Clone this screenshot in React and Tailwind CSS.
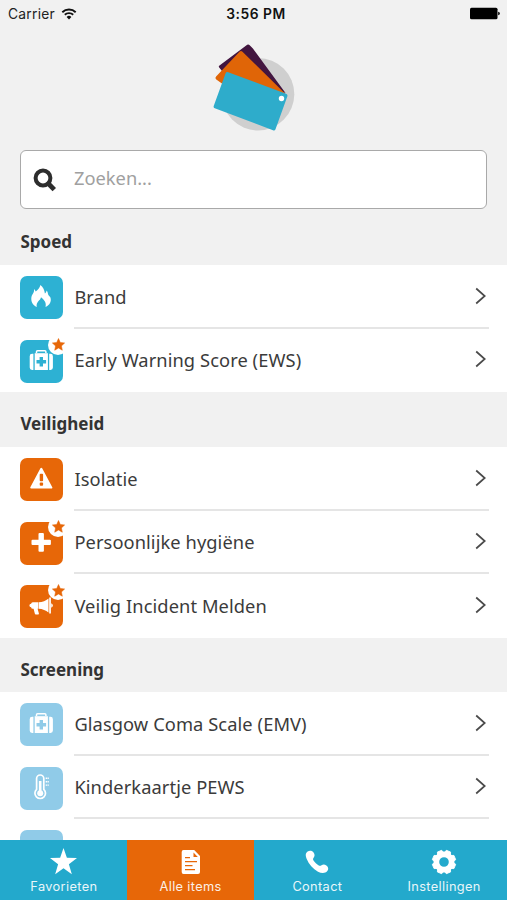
const Flame = () => (
  <path
    fill="#fff"
    d="M16.800 31C12.600 29 10.800 25.400 11.400 21.200c.3-2.400 1.700-3.200 2.400-5.200.3-1 .3-2 .2-3 .9.7 1.400 1.600 1.700 2.600C17.800 14 19.800 12 20.400 9c2.800 2.200 4 5 4.500 8.400.9-.6 1.500-1.400 1.600-2.900 1 .9 1.300 2.200 1.500 3.500.3 1.400 1.600 1.900 2.300 3.300 1.600 3.900-.6 8-4.800 9.600.9-3.600-.2-6.200-4.500-9.700-.3 3.200-5.400 4.500-4.200 9.800Z"
  />
);

const MedKit = ({ plus }) => (
  <g>
    <path d="M16.500 13v-1.200q0-1 1-1h7.400q1 0 1 1V13" fill="none" stroke="#fff" strokeWidth="1.500" />
    <path d="M14.700 13.200h13.200V30H14.700z" fill="#fff" />
    <path d="M13.400 13.800V30h-1.300q-2.400 0-2.400-2.400V16.200q0-2.400 2.400-2.400ZM29.200 13.800V30h1.300q2.400 0 2.400-2.400V16.200q0-2.400-2.400-2.400Z" fill="#fff" />
    <path d="M21.300 17v9.600M16.500 21.800h9.600" stroke={plus} strokeWidth="3.400" />
  </g>
);

const Warning = () => (
  <g>
    <path d="M21.300 10.800 31.400 29.600H11.200Z" fill="#fff" stroke="#fff" strokeWidth="2" strokeLinejoin="round" />
    <rect x="19.700" y="15.800" width="3.400" height="7.400" rx="1" fill="#e76708" />
    <rect x="19.700" y="24.600" width="3.400" height="3.200" rx="1" fill="#e76708" />
  </g>
);

const Plus = () => (
  <g fill="#fff">
    <rect x="18.500" y="11" width="5.400" height="18.800" rx="1" />
    <rect x="11.500" y="17.700" width="19.400" height="5.400" rx="1" />
  </g>
);

const Megaphone = () => (
  <g fill="#fff">
    <path d="M12.800 17.300h5.400v6.400h-5.400q-1.500 0-1.700-1.500-1.700-.2-1.700-1.700t1.700-1.700q.2-1.500 1.700-1.500Z" />
    <path d="M18.600 17.300c4-.2 7.200-1.600 9.900-3.900v14.100c-2.700-2.200-5.900-3.600-9.900-3.800Z" />
    <path d="M29.200 12.400h1.700v16h-1.700zM31.200 18.200q1.700.8 1.700 2.300t-1.700 2.300Z" />
    <path d="M13.400 23h4l1.500 5.500q.2 1-.8 1h-2.300q-.8 0-1-.9Z" />
  </g>
);

const Thermometer = () => (
  <g fill="none" stroke="#fff">
    <path d="M16.600 22.300V11.600a3.600 3.600 0 0 1 7.200 0v10.700a5.300 5.300 0 1 1-7.200 0Z" strokeWidth="1.700" />
    <path d="M20.200 14v11" strokeWidth="2.600" />
    <circle cx="20.200" cy="26.200" r="3" fill="#fff" stroke="none" />
    <path d="M25.700 11.300h3.200M25.700 14.700h3.200M25.700 18.100h3.200" strokeWidth="1.400" strokeDasharray="1.300 .5" />
  </g>
);

const Star = ({ size, className }) => (
  <svg width={size} height={size} viewBox="0 0 24 24" className={className}>
    <path d="m12 0 3 8.700 9 .1-7.200 5.600 2.600 8.900L12 18l-7.400 5.300 2.600-8.900L0 8.800l9-.1Z" fill="currentColor" />
  </svg>
);

// Fuller star used on the favorite badge
const BadgeStar = () => (
  <svg width="13" height="13" viewBox="0 0 24 24">
    <path
      d="m12 1 3.300 7.300 8 .9-5.900 5.400 1.600 7.900-7-4-7 4 1.600-7.900L.7 9.200l8-.9Z"
      fill="#e76708"
      stroke="#e76708"
      strokeLinejoin="round"
    />
  </svg>
);

const sections = [
  {
    title: "Spoed",
    header: "h-[47px] pt-px",
    tile: "bg-[#2db1d3]",
    items: [
      { label: "Brand", icon: <Flame /> },
      { label: "Early Warning Score (EWS)", icon: <MedKit plus="#2db1d3" />, favorite: true },
    ],
  },
  {
    title: "Veiligheid",
    header: "h-[55px] pt-[9px]",
    tile: "bg-[#e76708]",
    items: [
      { label: "Isolatie", icon: <Warning /> },
      { label: "Persoonlijke hygiëne", icon: <Plus />, favorite: true },
      { label: "Veilig Incident Melden", icon: <Megaphone />, favorite: true },
    ],
  },
  {
    title: "Screening",
    header: "h-[54.5px] pt-[9px]",
    tile: "bg-[#90cbe8]",
    items: [
      { label: "Glasgow Coma Scale (EMV)", icon: <MedKit plus="#90cbe8" /> },
      { label: "Kinderkaartje PEWS", icon: <Thermometer /> },
      { label: "", icon: null },
    ],
  },
];

const StatusBar = () => (
  <div className="grid h-7 shrink-0 grid-cols-3 items-center pl-[8px] pr-[6px] font-['Inter','Liberation_Sans',sans-serif] text-[13.8px] text-[#222]">
    <div className="flex items-center gap-[6px]">
      <span className="tracking-[0.25px]">Carrier</span>
      <svg width="16" height="12" viewBox="0 0 15 12" fill="none" stroke="#111" strokeWidth="1.900" className="mb-px">
        <path d="M.8 4.200a9.600 9.600 0 0 1 13.400 0M3.300 6.800a6 6 0 0 1 8.400 0" />
        <path d="M7.500 11.400 5.100 8.900a3.500 3.500 0 0 1 4.800 0Z" fill="#111" stroke="none" />
      </svg>
    </div>
    <span className="pl-[3px] text-center font-semibold tracking-[0.55px] text-[#111]">3:56 PM</span>
    <svg width="31" height="13" viewBox="0 0 31 13" className="mb-px justify-self-end">
      <rect x="0" y=".8" width="27.500" height="11.400" rx="1.500" fill="#000" />
      <path d="M28.200 4.700q1.600.3 1.600 1.800t-1.600 1.800Z" fill="#000" />
    </svg>
  </div>
);

const Logo = () => (
  <svg width="110" height="105" viewBox="0 0 110 105">
    <circle cx="58" cy="59.200" r="36.300" fill="#cfcfcf" />
    <path d="M47.200 9.800q1.300-.7 2.500.4l3.200 3.300L85.500 58 60 50 22 36l-3-3.700q-.6-1 .5-1.800Z" fill="#42153f" />
    <path d="M39.700 16.500q1.500-1 2.800.3L86 59.500 60 63 24 50l-7.700-5.500q-1.500-1.500-.2-3Z" fill="#e06507" />
    <path d="M28.200 37.200 86 58.700q2 .8 1.300 2.700L75.500 94.300q-.7 1.700-2.500 1L14.800 73.300q-1.700-.7-1-2.500L25.500 38.500q.8-2 2.700-1.300Z" fill="#2eaccb" />
    <circle cx="81.500" cy="63.500" r="2.700" fill="#fff" />
  </svg>
);

const Row = ({ item, tile, last }) => (
  <div className="flex h-[63.5px] pl-[20.4px] pr-[18px]">
    <div className={`relative mt-[11px] size-[43px] shrink-0 rounded-[7px] ${tile}`}>
      <svg width="43" height="43" viewBox="0 0 43 43">
        {item.icon}
      </svg>
      {item.favorite && (
        <span className="absolute -top-[5px] left-[28px] flex size-[20px] items-center justify-center rounded-full bg-white">
          <BadgeStar />
        </span>
      )}
    </div>
    <div className={`ml-[11px] flex flex-1 items-center justify-between border-b-2 ${last ? "border-transparent" : "border-[#e5e5e5]"}`}>
      <span className="pt-[2px] text-[18.3px] leading-6 tracking-[0.08px] text-[#3b3b3b]">{item.label}</span>
      <svg width="12" height="18" viewBox="0 0 12 18" fill="none" stroke="#4a4a4a" strokeWidth="1.700" className="mr-[2px]">
        <path d="m1.200 1.500 8.500 7.500-8.500 7.500" />
      </svg>
    </div>
  </div>
);

const tabs = [
  { label: "Favorieten", icon: <Star size={27} /> },
  {
    label: "Alle items",
    active: true,
    icon: (
      <svg width="20" height="26" viewBox="0 0 20 26">
        <path d="M2.500 1h10.700L19 7v16q0 2-2 2H2.500q-1.800 0-1.800-2V3q0-2 1.800-2Z" fill="#fff" />
        <path d="M12.500 3.600v4.300h4.300Z" fill="#e76708" />
        <path d="M4 8.700h5M4 12.700h12M4 16.700h7.500M4 20.700h10" stroke="#e76708" strokeWidth="1.200" />
      </svg>
    ),
  },
  {
    label: "Contact",
    icon: (
      <svg width="24" height="24" viewBox="0 0 24 24">
        <path d="M2.600 1.600C4.700.3 7.300.7 8.700 2.800c1.200 1.900 1.100 3.500-.1 4.900-.8 1-.7 1.900.1 3.100 1.300 1.900 2.800 3.200 4.700 4.400 1.200.7 2.100.8 3.100 0 1.600-1.200 3.200-1 4.900.2 2.100 1.500 2.400 3.800.9 5.700-2.200 2.600-5.800 2.500-9.300.6C8 18.900 3.800 14.300 1.600 8.700.5 5.900.2 3.200 2.600 1.600Z" fill="#fff" />
      </svg>
    ),
  },
  {
    label: "Instellingen",
    icon: (
      <svg width="26" height="26" viewBox="-13 -13 26 26">
        <circle r="7.600" fill="none" stroke="#fff" strokeWidth="5.600" />
        {[22.5, 67.5, 112.5, 157.5, 202.5, 247.5, 292.5, 337.5].map((angle) => (
          <path key={angle} d="M-3.600-8-2.300-11.700H2.300L3.600-8Z" fill="#fff" stroke="#fff" strokeWidth=".8" strokeLinejoin="round" transform={`rotate(${angle})`} />
        ))}
      </svg>
    ),
  },
];

const TabBar = () => (
  <nav className="grid h-[60px] shrink-0 grid-cols-4 bg-[#23a9cc] font-['Inter','Liberation_Sans',sans-serif] text-white">
    {tabs.map((tab) => (
      <button key={tab.label} className={`flex flex-col items-center pl-px pt-[7px] ${tab.active ? "bg-[#e76708]" : ""}`}>
        <span className="flex h-[29px] items-center">{tab.icon}</span>
        <span className="mt-[2px] text-[12.8px] leading-[18px] tracking-[0.35px] opacity-90">{tab.label}</span>
      </button>
    ))}
  </nav>
);

export default function App() {
  return (
    <div className="flex h-[900px] w-[507px] flex-col overflow-hidden bg-[#f1f1f1] font-['Noto_Sans',sans-serif]">
      <StatusBar />
      <div className="flex h-[122px] shrink-0 justify-center pl-[2px] pt-[7px]">
        <Logo />
      </div>
      <div className="mx-5 flex h-[59px] shrink-0 items-center rounded-[6px] border-[1.5px] border-[#a9a9a9] bg-white pl-[12px]">
        <svg width="24" height="24" viewBox="0 0 24 24" fill="none" stroke="#2d2d2d" strokeWidth="4">
          <circle cx="10" cy="10" r="7.400" />
          <path d="m15 15.300 6.300 6.300" strokeWidth="4.800" />
        </svg>
        <input
          placeholder="Zoeken..."
          className="ml-[17px] flex-1 pb-[4px] text-[18.3px] outline-none placeholder:text-[#a0a0a0]"
        />
      </div>
      <main className="min-h-0 flex-1 overflow-hidden pt-[9px]">
        {sections.map((section) => (
          <section key={section.title}>
            <h2 className={`flex items-center pl-[20.4px] text-[17px] font-bold text-[#333] ${section.header}`}>
              {section.title}
            </h2>
            <div className="bg-white">
              {section.items.map((item, i) => (
                <Row key={item.label} item={item} tile={section.tile} last={i === section.items.length - 1} />
              ))}
            </div>
          </section>
        ))}
      </main>
      <TabBar />
    </div>
  );
}
